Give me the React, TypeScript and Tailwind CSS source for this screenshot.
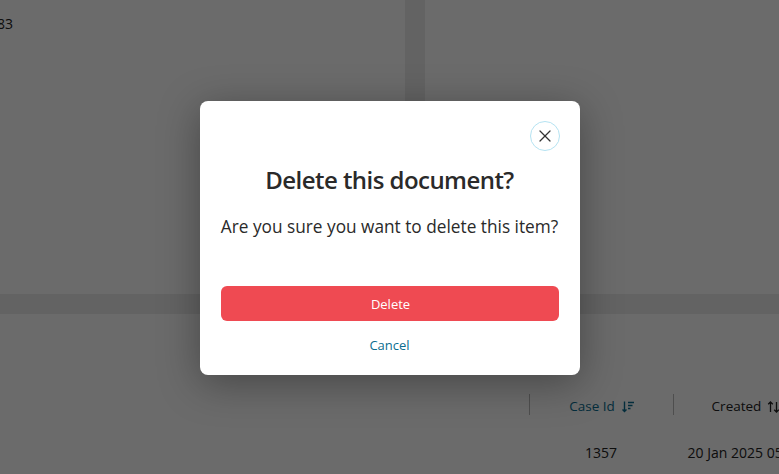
import { X } from 'lucide-react';

const font = { fontFamily: '"Open Sans", "Noto Sans", sans-serif' };

function SortDownIcon() {
  return (
    <svg width="14" height="14" viewBox="0 0 14 14" fill="none" stroke="currentColor" strokeWidth="1.4">
      <path d="M3.5 1.5v10M1.5 9.5l2 2 2-2" />
      <path d="M7 2.5h6M7 5.5h4.5M7 8.5h2.5" />
    </svg>
  );
}

function SortBothIcon() {
  return (
    <svg width="13" height="14" viewBox="0 0 13 14" fill="none" stroke="currentColor" strokeWidth="1.3">
      <path d="M3.5 12V2M1.2 4.3l2.3-2.3 2.3 2.3" />
      <path d="M9.5 2v10M7.2 9.7l2.3 2.3 2.3-2.3" />
    </svg>
  );
}

function Background() {
  return (
    <div className="flex h-full w-full flex-col bg-[#ededed]">
      <div className="flex h-[294px] gap-5">
        <div className="flex-1 overflow-hidden bg-white pt-[14px] text-sm leading-[19px] text-[#222]">
          <span className="-ml-[3px] block">83</span>
        </div>
        <div className="w-[354px] bg-white" />
      </div>
      <div className="mt-5 flex-1 overflow-hidden bg-white pt-[80px] text-sm">
        <div className="flex h-[21px] items-center pl-[529px] text-[13.5px]">
          <div className="flex h-full w-36 shrink-0 items-center justify-center gap-[6px] border-l border-[#bbb] pt-[5px] pl-px font-medium text-[#0b6d8f]">
            Case Id <SortDownIcon />
          </div>
          <div className="flex h-full w-36 shrink-0 items-center justify-center gap-[6px] border-l border-[#bbb] pt-[5px] pl-px text-[#222]">
            Created <SortBothIcon />
          </div>
        </div>
        <div className="mt-[28px] flex pl-[529px] text-[#222]">
          <div className="w-36 shrink-0 text-center">1357</div>
          <div className="w-36 shrink-0 text-center whitespace-nowrap">20 Jan 2025 05:12</div>
        </div>
      </div>
    </div>
  );
}

export default function App() {
  return (
    <div className="relative h-[474px] w-[779px] overflow-hidden" style={font}>
      <Background />
      <div className="absolute inset-0 flex items-center justify-center bg-black/[0.58] pt-[2px]">
        <div className="flex h-[274px] w-[380px] flex-col rounded-lg bg-white px-[21px] pt-5 shadow-[0_8px_40px_rgba(0,0,0,0.35)]">
          <div className="-mr-px flex justify-end">
            <button className="flex size-[30px] items-center justify-center rounded-full border border-[#b5e3f2] text-[#333]">
              <X size={20} strokeWidth={1.5} />
            </button>
          </div>
          <h2 className="mt-[10px] text-center text-2xl leading-[38px] font-semibold tracking-[-0.55px] text-[#2a2a2a]">
            Delete this document?
          </h2>
          <p className="mt-[13px] text-center text-[17.25px] leading-[30px] whitespace-nowrap text-[#2a2a2a]">
            Are you sure you want to delete this item?
          </p>
          <button className="mt-[44px] h-[35px] w-full rounded-md bg-[#ef4a52] pt-[2px] pl-[2px] text-[13px] text-white">
            Delete
          </button>
          <button className="mt-[15px] h-[20px] text-center text-[13px] text-[#0b6d8f]">Cancel</button>
        </div>
      </div>
    </div>
  );
}
